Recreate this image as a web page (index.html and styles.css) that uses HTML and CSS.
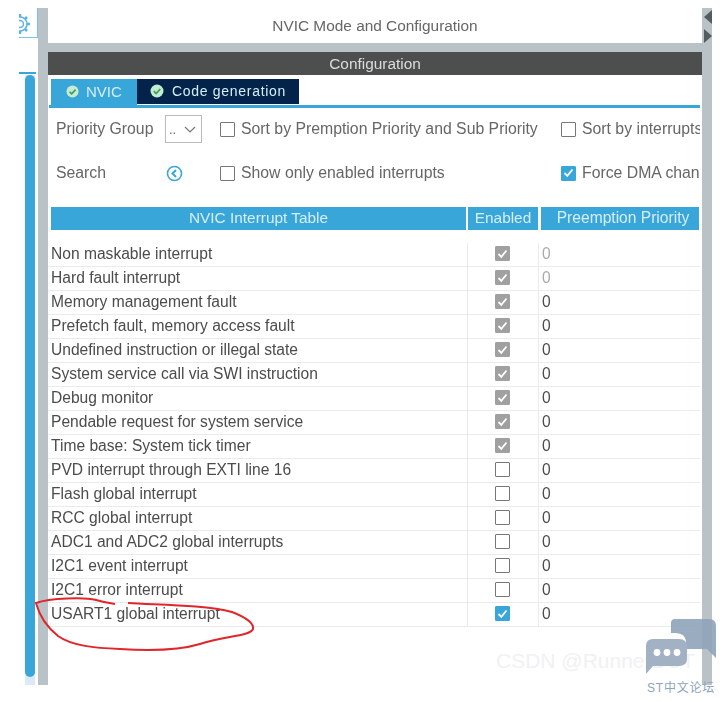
FILE: index.html
```html
<!DOCTYPE html>
<html lang="en">
<head>
    <meta charset="UTF-8">
    <title>NVIC Mode and Configuration</title>
    <link rel="stylesheet" href="styles.css">
</head>
<body>
    <svg class="defs" width="0" height="0">
        <symbol id="tick" viewBox="0 0 15 15">
            <path d="M3.500 8l2.800 2.800L11.500 4.500" fill="none" stroke="#fff" stroke-width="1.800"/>
        </symbol>
        <symbol id="tabok" viewBox="0 0 14 14">
            <circle cx="7" cy="7" r="6.500" fill="#c4ecd0"/>
            <path d="M3.800 7.200l2.300 2.300L10.300 5" fill="none" stroke="#3d9a63" stroke-width="1.700"/>
        </symbol>
    </svg>
    <div class="app">
        <div class="side">
            <div class="gear-box">
                <svg class="gear" width="22" height="22" viewBox="0 0 22 22">
                    <circle cx="11" cy="11" r="3.500" fill="none" stroke="#5ab4e0" stroke-width="1.500"/>
                    <circle cx="11" cy="11" r="7" fill="none" stroke="#5ab4e0" stroke-width="1.500"/>
                    <path d="M11 1v3M11 18v3M1 11h3M18 11h3M4 4l2 2M16 16l2 2M18 4l-2 2M6 16l-2 2" stroke="#5ab4e0" stroke-width="2.500"/>
                </svg>
            </div>
            <div class="side-line"></div>
            <div class="side-track"><div class="side-thumb"></div></div>
        </div>
        <div class="rail"></div>
        <div class="main">
            <div class="title">NVIC Mode and Configuration</div>
            <div class="band"></div>
            <div class="config-head">Configuration</div>
            <div class="tabs">
                <div class="tab tab-active"><svg class="tab-icon" width="13" height="13"><use href="#tabok"/></svg>NVIC</div>
                <div class="tab tab-dark"><svg class="tab-icon" width="14" height="14"><use href="#tabok"/></svg>Code generation</div>
            </div>
            <div class="filters">
                <div class="flabel">Priority Group</div>
                <div class="select">..<svg width="12" height="7" viewBox="0 0 12 7"><path d="M1 1l5 5 5-5" fill="none" stroke="#777" stroke-width="1.200"/></svg></div>
                <label class="check"><span class="box"></span>Sort by Premption Priority and Sub Priority</label>
                <label class="check"><span class="box"></span>Sort by interrupts</label>
                <div class="flabel">Search</div>
                <div><svg class="search-icon" width="17" height="17" viewBox="0 0 17 17"><circle cx="8.500" cy="8.500" r="7" fill="none" stroke="#39a6da" stroke-width="1.600"/><path d="M10 5L6.500 8.500 10 12" fill="none" stroke="#39a6da" stroke-width="2"/></svg></div>
                <label class="check"><span class="box"></span>Show only enabled interrupts</label>
                <label class="check"><span class="box box-on"><svg width="15" height="15"><use href="#tick"/></svg></span>Force DMA channel</label>
            </div>
            <div class="thead">
                <div class="th th-name">NVIC Interrupt Table</div>
                <div class="th th-enabled">Enabled</div>
                <div class="th th-prio">Preemption Priority</div>
            </div>
            <div class="tbody">
                <div class="row"><div class="name">Non maskable interrupt</div><div class="en"><span class="box box-dis"><svg width="15" height="15"><use href="#tick"/></svg></span></div><div class="prio prio-dis">0</div></div>
                <div class="row"><div class="name">Hard fault interrupt</div><div class="en"><span class="box box-dis"><svg width="15" height="15"><use href="#tick"/></svg></span></div><div class="prio prio-dis">0</div></div>
                <div class="row"><div class="name">Memory management fault</div><div class="en"><span class="box box-dis"><svg width="15" height="15"><use href="#tick"/></svg></span></div><div class="prio">0</div></div>
                <div class="row"><div class="name">Prefetch fault, memory access fault</div><div class="en"><span class="box box-dis"><svg width="15" height="15"><use href="#tick"/></svg></span></div><div class="prio">0</div></div>
                <div class="row"><div class="name">Undefined instruction or illegal state</div><div class="en"><span class="box box-dis"><svg width="15" height="15"><use href="#tick"/></svg></span></div><div class="prio">0</div></div>
                <div class="row"><div class="name">System service call via SWI instruction</div><div class="en"><span class="box box-dis"><svg width="15" height="15"><use href="#tick"/></svg></span></div><div class="prio">0</div></div>
                <div class="row"><div class="name">Debug monitor</div><div class="en"><span class="box box-dis"><svg width="15" height="15"><use href="#tick"/></svg></span></div><div class="prio">0</div></div>
                <div class="row"><div class="name">Pendable request for system service</div><div class="en"><span class="box box-dis"><svg width="15" height="15"><use href="#tick"/></svg></span></div><div class="prio">0</div></div>
                <div class="row"><div class="name">Time base: System tick timer</div><div class="en"><span class="box box-dis"><svg width="15" height="15"><use href="#tick"/></svg></span></div><div class="prio">0</div></div>
                <div class="row"><div class="name">PVD interrupt through EXTI line 16</div><div class="en"><span class="box"></span></div><div class="prio">0</div></div>
                <div class="row"><div class="name">Flash global interrupt</div><div class="en"><span class="box"></span></div><div class="prio">0</div></div>
                <div class="row"><div class="name">RCC global interrupt</div><div class="en"><span class="box"></span></div><div class="prio">0</div></div>
                <div class="row"><div class="name">ADC1 and ADC2 global interrupts</div><div class="en"><span class="box"></span></div><div class="prio">0</div></div>
                <div class="row"><div class="name">I2C1 event interrupt</div><div class="en"><span class="box"></span></div><div class="prio">0</div></div>
                <div class="row"><div class="name">I2C1 error interrupt</div><div class="en"><span class="box"></span></div><div class="prio">0</div></div>
                <div class="row"><div class="name">USART1 global interrupt</div><div class="en"><span class="box box-on"><svg width="15" height="15"><use href="#tick"/></svg></span></div><div class="prio">0</div></div>
            </div>
        </div>
        <div class="rail rail-right">
            <span class="arrow arrow-left"></span>
            <span class="arrow arrow-right"></span>
        </div>
    </div>

    <!-- hand drawn circle on top of the screenshot -->
    <svg class="scribble" width="724" height="702" viewBox="0 0 724 702">
        <path d="M128 603C160 605 205 605 232 612C245 617 254 623 253 629C250 636 225 636 200 644C180 650 150 651 120 649C95 648 72 646 58 636C48 628 40 618 36 603C50 598 85 597 96 600C103 602 108 603 115 604" fill="none" stroke="#e0262b" stroke-width="2"/>
    </svg>
    <div class="watermark">CSDN @RunnerDUT</div>
    <div class="logo">
        <svg width="72" height="58" viewBox="0 0 72 58">
            <path d="M30 0H64Q71 0 71 7V39L62 30H41V24Q41 14 30 14H26V4Q26 0 30 0Z" fill="#8fa3b8" opacity=".9"/>
            <path d="M8 20H34Q42 20 42 28V40Q42 47 34 47H8L1 55V27Q1 20 8 20Z" fill="#a3b1c4"/>
            <circle cx="12" cy="33.500" r="3.400" fill="#fff"/>
            <circle cx="22" cy="33.500" r="3.400" fill="#fff"/>
            <circle cx="32" cy="33.500" r="3.400" fill="#fff"/>
        </svg>
        <div class="logo-text">ST中文论坛</div>
    </div>
</body>
</html>
```

FILE: styles.css
```css
* {
    box-sizing: border-box;
}

body {
    margin: 0;
    width: 724px;
    height: 702px;
    overflow: hidden;
    position: relative;
    background: #fff;
    font-family: "Liberation Sans", Arial, sans-serif;
    color: #555;
}

.defs {
    position: absolute;
}

.app {
    display: flex;
    height: 677px;
    margin: 8px 12px 0 19px;
    filter: blur(0.45px);
}

/* left tree panel */
.side {
    width: 19px;
    display: flex;
    flex-direction: column;
}

.gear-box {
    height: 30px;
    border-right: 1px solid #7cc4e6;
    border-bottom: 1px solid #7cc4e6;
    overflow: hidden;
    padding: 5px 0 0 0;
}

.gear {
    display: block;
    margin-left: -10px;
}

.side-line {
    height: 2px;
    margin-top: 34px;
    margin-right: 2px;
    background: #39a6da;
}

.side-track {
    flex: 1;
    margin: 1px 3px 0 6px;
    background: #d8ebf6;
}

.side-thumb {
    height: 602px;
    background: #39a6da;
    border-radius: 5px;
}

.rail {
    width: 10px;
    background: #b9c3c7;
}

.rail-right {
    display: flex;
    flex-direction: column;
    gap: 5px;
    padding: 2px 0 0 2px;
}

.arrow {
    width: 0;
    height: 0;
    border-top: 7.5px solid transparent;
    border-bottom: 7.5px solid transparent;
}

.arrow-left {
    border-right: 8px solid #555c60;
}

.arrow-right {
    border-left: 8px solid #555c60;
}

.main {
    flex: 1;
    min-width: 0;
    display: flex;
    flex-direction: column;
}

.title {
    height: 35px;
    text-align: center;
    line-height: 35px;
    font-size: 15.4px;
    color: #666;
}

.band {
    height: 9px;
    background: #b9c3c7;
}

.config-head {
    height: 23px;
    line-height: 24px;
    background: #4d4f4f;
    color: #dcdcdc;
    text-align: center;
    font-size: 15.4px;
}

.tabs {
    display: flex;
    align-items: flex-start;
    height: 29px;
    margin: 4px 2px 0 1px;
    padding-left: 2px;
    border-bottom: 3px solid #39a6da;
}

.tab {
    display: flex;
    align-items: center;
    height: 26px;
    padding-bottom: 1px;
    font-size: 15px;
    color: #d5eef9;
}

.tab-active {
    width: 86px;
    padding-left: 15px;
    gap: 7px;
    background: #39a6da;
}

.tab-dark {
    width: 162px;
    height: 25px;
    padding-left: 13px;
    gap: 8px;
    background: #03234b;
    font-size: 14px;
    letter-spacing: 0.7px;
}

.filters {
    display: grid;
    grid-template-columns: 109px 55px 341px 1fr;
    grid-auto-rows: 44px;
    align-items: center;
    width: 652px;
    margin-top: -1px;
    padding-left: 8px;
    overflow: hidden;
    white-space: nowrap;
    font-size: 15.8px;
    color: #666;
}

.select {
    width: 37px;
    height: 28px;
    display: flex;
    align-items: center;
    justify-content: space-between;
    padding: 0 5px 0 3px;
    border: 1px solid #bbb;
    font-size: 13px;
}

.search-icon {
    display: block;
    margin-left: 1px;
}

.check {
    display: flex;
    align-items: center;
    gap: 6px;
}

.box {
    display: block;
    width: 15px;
    height: 15px;
    flex: none;
    border: 1.5px solid #777;
    border-radius: 1px;
    background: #fff;
}

.box svg {
    display: block;
    margin: -1.5px;
}

.box-dis {
    border-color: #a0a0a0;
    background: #a0a0a0;
}

.box-on {
    border-color: #39a6da;
    background: #39a6da;
}

.thead {
    display: flex;
    margin: 12px 3px 0 3px;
    gap: 2px;
    height: 23px;
}

.th {
    background: #39a6da;
    color: #d5eef9;
    text-align: center;
    line-height: 22px;
    font-size: 15.4px;
}

.th-name {
    width: 415px;
}

.th-enabled {
    width: 70px;
}

.th-prio {
    flex: 1;
    margin-left: 1px;
    padding-left: 6px;
    font-size: 15.6px;
}

.tbody {
    margin: 13px 2px 0 0;
}

.row {
    display: grid;
    grid-template-columns: 419px 71px 1fr;
    height: 24px;
    border-bottom: 1px solid #e9ebec;
    align-items: stretch;
    font-size: 15.6px;
    color: #4c4c4c;
}

.name {
    padding-left: 3px;
    line-height: 22px;
    white-space: nowrap;
}

.en {
    display: flex;
    align-items: center;
    justify-content: center;
    padding-right: 1px;
    padding-bottom: 2px;
    border-left: 1px solid #e9ebec;
}

.prio {
    padding-left: 3px;
    line-height: 22px;
    border-left: 1px solid #e9ebec;
}

.prio-dis {
    color: #aaa;
}

/* things lying over the screenshot */
.scribble {
    position: absolute;
    left: 0;
    top: 0;
}

.watermark {
    position: absolute;
    left: 496px;
    top: 649px;
    font-size: 21px;
    color: #f0f1f2;
    white-space: nowrap;
}

.logo {
    position: absolute;
    left: 645px;
    top: 619px;
    width: 72px;
}

.logo svg {
    display: block;
}

.logo-text {
    margin-top: 1px;
    padding-left: 2px;
    font-family: "Liberation Sans", "Noto Sans CJK SC", sans-serif;
    font-size: 12px;
    letter-spacing: 0.8px;
    color: #8fa3bc;
    white-space: nowrap;
}
```
